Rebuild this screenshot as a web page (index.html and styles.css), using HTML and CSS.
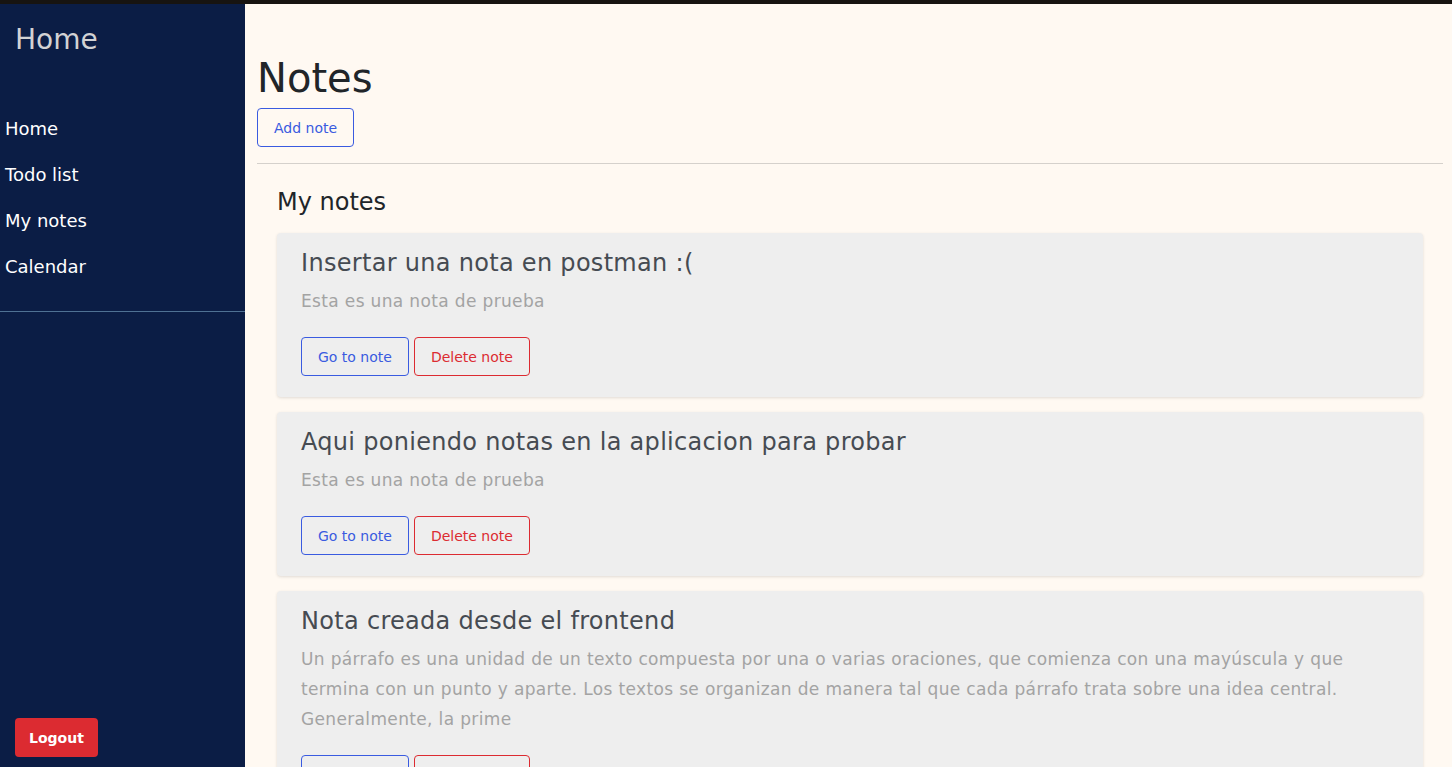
FILE: index.html
```html
<!DOCTYPE html>
<html lang="es">
<head>
<meta charset="utf-8">
<title>Notes</title>
<link rel="stylesheet" href="styles.css">
</head>
<body>
<div class="topbar"></div>
<div class="app">
  <aside class="sidebar">
    <div class="brand">Home</div>
    <nav class="nav">
      <a class="nav-link" href="#">Home</a>
      <a class="nav-link" href="#">Todo list</a>
      <a class="nav-link" href="#">My notes</a>
      <a class="nav-link" href="#">Calendar</a>
    </nav>
    <div class="side-divider"></div>
    <button class="btn-logout">Logout</button>
  </aside>
  <main class="main">
    <h1 class="page-title">Notes</h1>
    <button class="btn btn-blue">Add note</button>
    <hr class="rule">
    <section class="notes">
      <h2 class="notes-title">My notes</h2>
      <div class="card">
        <h3 class="card-title">Insertar una nota en postman :(</h3>
        <p class="card-text">Esta es una nota de prueba</p>
        <div class="actions">
          <button class="btn btn-blue">Go to note</button>
          <button class="btn btn-red">Delete note</button>
        </div>
      </div>
      <div class="card">
        <h3 class="card-title">Aqui poniendo notas en la aplicacion para probar</h3>
        <p class="card-text">Esta es una nota de prueba</p>
        <div class="actions">
          <button class="btn btn-blue">Go to note</button>
          <button class="btn btn-red">Delete note</button>
        </div>
      </div>
      <div class="card">
        <h3 class="card-title">Nota creada desde el frontend</h3>
        <p class="card-text">Un párrafo es una unidad de un texto compuesta por una o varias oraciones, que comienza con una mayúscula y que termina con un punto y aparte. Los textos se organizan de manera tal que cada párrafo trata sobre una idea central. Generalmente, la prime</p>
        <div class="actions">
          <button class="btn btn-blue">Go to note</button>
          <button class="btn btn-red">Delete note</button>
        </div>
      </div>
    </section>
  </main>
</div>
</body>
</html>
```

FILE: styles.css
```css
* { box-sizing: border-box; }
html, body { margin: 0; padding: 0; height: 100%; overflow: hidden; }
body {
  font-family: "DejaVu Sans", "Open Sans", sans-serif;
  background: #fff9f2;
  color: #212529;
}
.topbar { height: 4px; background: #171411; }
.app { display: flex; height: 763px; }
.sidebar {
  width: 245px;
  flex: none;
  background: #0b1d45;
  display: flex;
  flex-direction: column;
}
.brand {
  color: #d2d2d4;
  font-size: 28px;
  padding: 20px 0 0 15px;
  line-height: 32px;
}
.nav { display: flex; flex-direction: column; margin-top: 61px; }
.nav-link {
  color: #ffffff;
  text-decoration: none;
  font-size: 18px;
  line-height: 24px;
  padding: 0 5px;
  margin-bottom: 22px;
}
.side-divider { height: 1px; background: #4f7193; margin-top: 10px; }
.btn-logout {
  margin-top: auto;
  margin-left: 15px;
  margin-bottom: 10px;
  align-self: flex-start;
  height: 39px;
  padding: 0 14px;
  background: #dc2b31;
  color: #fff;
  border: none;
  border-radius: 4px;
  font-family: inherit;
  font-weight: 700;
  font-size: 14px;
}
.main { flex: 1; padding: 0 9px 0 12px; overflow: hidden; }
.page-title {
  font-size: 40px;
  font-weight: 400;
  margin: 50px 0 6px;
  line-height: 48px;
}
.btn {
  height: 39px;
  padding: 0 16px;
  background: transparent;
  border: 1px solid;
  border-radius: 4px;
  font-family: inherit;
  font-size: 14px;
}
.btn-blue { color: #3a5be0; border-color: #3a5be0; }
.btn-red { color: #dc2b31; border-color: #dc2b31; }
.rule { border: none; border-top: 1px solid #d5d1cc; margin: 16px 0 0; }
.notes { padding: 0 20px; }
.notes-title {
  font-size: 24px;
  font-weight: 400;
  margin: 23px 0 16px;
  line-height: 30px;
}
.card {
  background: #eeeeee;
  border-radius: 4px;
  box-shadow: 0 1px 3px rgba(0,0,0,0.12);
  padding: 16px 24px 21px;
  margin-bottom: 15px;
}
.card-title {
  font-size: 24px;
  font-weight: 400;
  color: #464b52;
  line-height: 29px;
  letter-spacing: 0.3px;
  margin: 0 0 8px;
}
.card-text {
  font-size: 17px;
  letter-spacing: 0.35px;
  color: #a3a3a3;
  line-height: 30px;
  margin: 0 0 21px;
}
.actions { display: flex; gap: 5px; }
```
